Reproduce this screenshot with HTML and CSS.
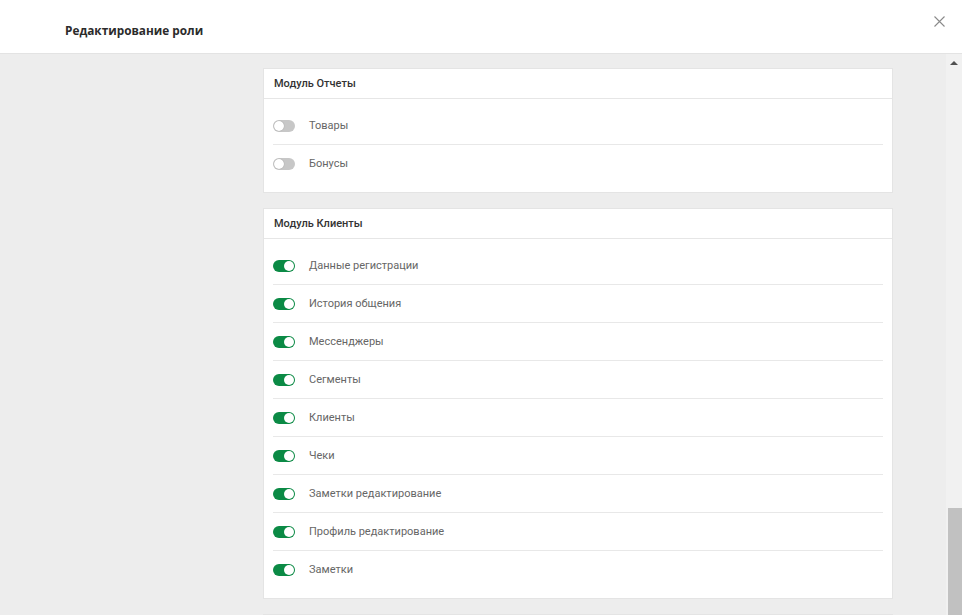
FILE: index.html
```html
<!DOCTYPE html><html lang="ru">
<head>
  <meta charset="UTF-8">
  <meta name="viewport" content="width=device-width, initial-scale=1.0">
  <title>Редактирование роли</title>
  <link rel="stylesheet" href="styles.css">
</head>
<body>
  <div class="modal">
    <div class="modal-header">
      <h1>Редактирование роли</h1>
      <button class="close" aria-label="Закрыть">
        <svg width="11" height="11" viewBox="0 0 11 11"><path d="M0.5 0.5L10.5 10.5M10.5 0.5L0.5 10.5" stroke="#8a8a8a" stroke-width="1.1" fill="none"/></svg>
      </button>
    </div>

    <div class="modal-body">
      <div class="content">
        <!-- Reports module -->
        <div class="card">
          <div class="card-head">Модуль Отчеты</div>
          <div class="card-body">
            <div class="row"><span class="switch"></span><span class="label">Товары</span></div>
            <div class="row"><span class="switch"></span><span class="label">Бонусы</span></div>
          </div>
        </div>

        <!-- Clients module -->
        <div class="card">
          <div class="card-head">Модуль Клиенты</div>
          <div class="card-body">
            <div class="row"><span class="switch on"></span><span class="label">Данные регистрации</span></div>
            <div class="row"><span class="switch on"></span><span class="label">История общения</span></div>
            <div class="row"><span class="switch on"></span><span class="label">Мессенджеры</span></div>
            <div class="row"><span class="switch on"></span><span class="label">Сегменты</span></div>
            <div class="row"><span class="switch on"></span><span class="label">Клиенты</span></div>
            <div class="row"><span class="switch on"></span><span class="label">Чеки</span></div>
            <div class="row"><span class="switch on"></span><span class="label">Заметки редактирование</span></div>
            <div class="row"><span class="switch on"></span><span class="label">Профиль редактирование</span></div>
            <div class="row"><span class="switch on"></span><span class="label">Заметки</span></div>
          </div>
        </div>

        <!-- next module, below the fold -->
        <div class="card">
          <div class="card-head"></div>
        </div>
      </div>

      <div class="scrollbar">
        <div class="scroll-btn"></div>
        <div class="scroll-track"><div class="scroll-thumb"></div></div>
      </div>
    </div>
  </div>
</body>
</html>
```

FILE: styles.css
```css
html, body {
  height: 100%;
}
body {
  margin: 0;
  font-family: Roboto, Arial, sans-serif;
  background: #ededed;
  overflow: hidden;
}
.modal {
  height: 100vh;
  display: flex;
  flex-direction: column;
}
.modal-header {
  height: 53px;
  background: white;
  border-bottom: 1px solid #e3e3e3;
  display: flex;
  align-items: center;
  justify-content: space-between;
  padding: 0 17px 0 65px;
  flex-shrink: 0;
}
.modal-header h1 {
  margin: 6px 0 0;
  font-family: "Open Sans", Arial, sans-serif;
  font-size: 11.8px;
  font-weight: 700;
  color: #2b2b2b;
}
.close {
  background: none;
  border: none;
  padding: 0;
  margin-top: -10px;
  cursor: pointer;
  line-height: 0;
}
.modal-body {
  flex: 1;
  display: flex;
  min-height: 0;
}
.content {
  flex: 1;
  overflow: hidden;
  padding: 14px 0 0 263px;
}
.card {
  width: 628px;
  background: white;
  border: 1px solid #e4e4e4;
  margin-bottom: 15px;
}
.card-head {
  height: 29px;
  line-height: 29px;
  padding: 0 10px;
  border-bottom: 1px solid #e6e6e6;
  font-size: 11px;
  font-weight: 500;
  color: #333;
}
.card-body {
  padding: 8px 9px 10px 9px;
}
.row {
  height: 37px;
  display: flex;
  align-items: center;
  gap: 14px;
  border-bottom: 1px solid #e8e8e8;
}
.row:last-child {
  border-bottom: none;
}
.label {
  font-size: 11px;
  color: #666;
}
.switch {
  width: 22px;
  height: 12px;
  border-radius: 6px;
  background: #c7c7c7;
  position: relative;
  flex-shrink: 0;
}
.switch::after {
  content: "";
  position: absolute;
  top: 1px;
  left: 1px;
  width: 10px;
  height: 10px;
  border-radius: 50%;
  background: white;
  box-shadow: 0 0 1px rgba(0,0,0,0.35);
}
.switch.on {
  background: #0b8a45;
}
.switch.on::after {
  left: 11px;
  box-shadow: none;
}
.scrollbar {
  width: 16px;
  background: #f1f1f1;
  display: flex;
  flex-direction: column;
  flex-shrink: 0;
}
.scroll-btn {
  height: 17px;
  display: flex;
  align-items: center;
  justify-content: center;
}
.scroll-btn::before {
  content: "";
  border-left: 4px solid transparent;
  border-right: 4px solid transparent;
  border-bottom: 4px solid #505050;
}
.scroll-track {
  flex: 1;
  display: flex;
  flex-direction: column;
  justify-content: flex-end;
  padding: 0 0 0 2px;
}
.scroll-thumb {
  height: 107px;
  background: #c1c1c1;
}
```
